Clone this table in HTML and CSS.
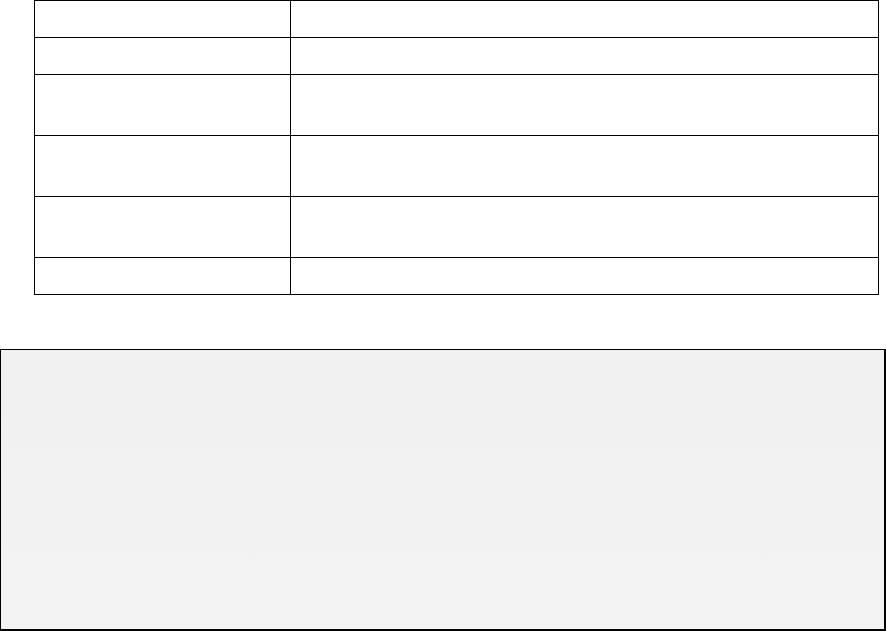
FILE: index.html
```html
<!DOCTYPE html>
<html>
<head>
<meta charset="utf-8">
<link rel="stylesheet" href="styles.css">
</head>
<body>
<table class="grid">
  <tr class="short"><td class="c1"></td><td class="c2"></td></tr>
  <tr class="short"><td class="c1"></td><td class="c2"></td></tr>
  <tr class="tall"><td class="c1"></td><td class="c2"></td></tr>
  <tr class="tall"><td class="c1"></td><td class="c2"></td></tr>
  <tr class="tall"><td class="c1"></td><td class="c2"></td></tr>
  <tr class="short"><td class="c1"></td><td class="c2"></td></tr>
</table>
<div class="panel"></div>
</body>
</html>
```
FILE: styles.css
```css
html, body {
  margin: 0;
  padding: 0;
  background: #fff;
  font-family: "Liberation Sans", Arial, sans-serif;
}
.grid {
  margin-left: 34px;
  width: 845px;
  border-collapse: collapse;
  table-layout: fixed;
}
.grid td {
  border: 1px solid #000;
  padding: 0;
}
.grid .c1 { width: 255px; }
.short td { height: 36px; }
.tall td { height: 60px; }
.panel {
  box-sizing: border-box;
  margin-top: 54px;
  width: 886px;
  height: 282px;
  border: 1px solid #000;
  border-right-width: 2px;
  border-bottom-width: 2px;
  background: linear-gradient(#f0f0f0, #f3f3f3);
}
```
